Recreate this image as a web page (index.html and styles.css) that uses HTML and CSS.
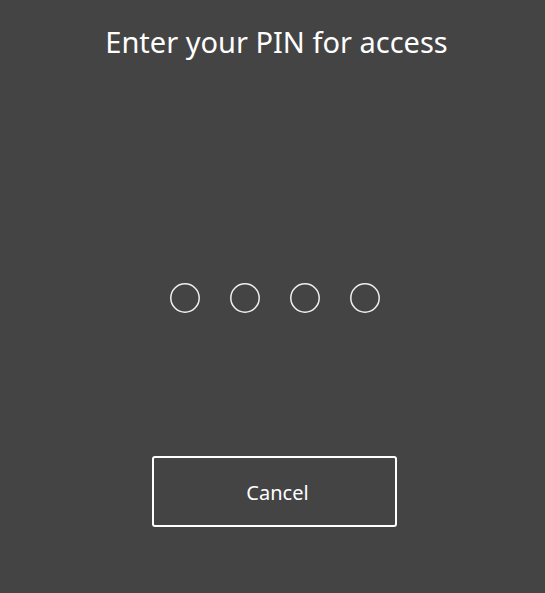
FILE: index.html
```html
<!DOCTYPE html>
<html>
<head>
<meta charset="utf-8">
<link rel="stylesheet" href="styles.css">
</head>
<body>
<main class="screen">
  <h1 class="title">Enter your PIN for access</h1>
  <div class="dots">
    <svg class="dot" width="30" height="30" viewBox="0 0 30 30"><circle cx="15" cy="15" r="14.2" /></svg>
    <svg class="dot" width="30" height="30" viewBox="0 0 30 30"><circle cx="15" cy="15" r="14.2" /></svg>
    <svg class="dot" width="30" height="30" viewBox="0 0 30 30"><circle cx="15" cy="15" r="14.2" /></svg>
    <svg class="dot" width="30" height="30" viewBox="0 0 30 30"><circle cx="15" cy="15" r="14.2" /></svg>
  </div>
  <button class="cancel">Cancel</button>
</main>
</body>
</html>
```
FILE: styles.css
```css
html, body {
  margin: 0;
  padding: 0;
  background: #444444;
}
.screen {
  width: 545px;
  height: 593px;
  display: flex;
  flex-direction: column;
  align-items: center;
  color: #ffffff;
  font-family: "Noto Sans", "DejaVu Sans", sans-serif;
}
.title {
  margin: 22px 0 0;
  font-size: 29px;
  font-weight: 400;
  line-height: 40px;
  margin-left: 8px;
}
.dots {
  display: flex;
  gap: 30px;
  margin-top: 221px;
  margin-left: 5px;
}
.dot {
  display: block;
  fill: none;
  stroke: #f0f0f0;
  stroke-width: 1.5;
}
.cancel {
  margin-top: 143px;
  margin-left: 4px;
  width: 245px;
  height: 71px;
  background: transparent;
  border: 2px solid #ffffff;
  border-radius: 3px;
  color: #ffffff;
  font-family: "Noto Sans", "DejaVu Sans", sans-serif;
  font-size: 20px;
  padding: 2px 0 0 6px;
}
```
